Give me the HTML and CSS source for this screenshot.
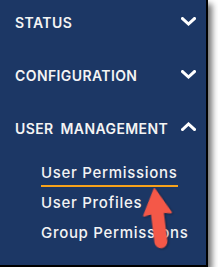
FILE: index.html
```html
<!DOCTYPE html>
<html lang="en">
<head>
  <meta charset="UTF-8" />
  <title>Sidebar menu</title>
  <link rel="stylesheet" href="styles.css">
</head>
<body>
  <nav class="sidebar">
    <div class="section">
      <div class="section-head">
        <span>STATUS</span>
        <svg class="chev" viewBox="0 0 15 9"><polyline points="1.5,1.5 7.5,7 13.5,1.5"/></svg>
      </div>
    </div>
    <div class="section">
      <div class="section-head">
        <span>CONFIGURATION</span>
        <svg class="chev" viewBox="0 0 15 9"><polyline points="1.5,1.5 7.5,7 13.5,1.5"/></svg>
      </div>
    </div>
    <div class="section open">
      <div class="section-head">
        <span class="wide">USER MANAGEMENT</span>
        <svg class="chev up" viewBox="0 0 15 9"><polyline points="1.5,7.5 7.5,2 13.5,7.5"/></svg>
      </div>
      <ul class="submenu">
        <li><a class="active">User Permissions</a></li>
        <li><a>User Profiles</a></li>
        <li><a>Group Permissions</a></li>
      </ul>
    </div>

    <!-- callout arrow -->
    <svg class="arrow" viewBox="0 0 30 64">
      <path d="M15 3 L28.5 28 L20.5 26.5 L20.5 56 A5.5 5.5 0 0 1 9.5 56 L9.5 26.5 L1.5 28 Z"/>
    </svg>
  </nav>
</body>
</html>
```

FILE: styles.css
```css
body {
  margin: 0;
  background: #fff;
  font-family: Inter, 'Open Sans', sans-serif;
}

.sidebar {
  position: relative;
  width: 206px;
  height: 252px;
  padding-top: 13px;
  background: #1c3765;
  border-left: 1px solid #000;
  border-right: 2px solid #000;
  border-bottom: 2px solid #000;
  margin-left: -1px;
  box-shadow: 4px 4px 6px rgba(0,0,0,0.55);
  color: #f4f4f4;
}

.section {
  padding-bottom: 33px;
}

.section.open {
  padding-bottom: 0;
}

.section-head {
  display: flex;
  justify-content: space-between;
  align-items: center;
  height: 20px;
  line-height: 20px;
  padding: 0 10px 0 15px;
  font-size: 14px;
  font-weight: 600;
  letter-spacing: 0.4px;
}

.section-head .wide {
  word-spacing: 3px;
}

.chev {
  width: 15px;
  height: 9px;
  margin-top: -4px;
  fill: none;
  stroke: #fff;
  stroke-width: 3;
  stroke-linecap: square;
}

.chev.up {
  margin-top: -6px;
}

.submenu {
  list-style: none;
  margin: 23px 0 0;
  padding: 0 0 0 41px;
}

.submenu li a {
  display: inline-block;
  line-height: 20px;
  font-size: 15px;
  font-weight: 500;
  letter-spacing: 0.7px;
  padding-bottom: 2px;
  border-bottom: 2px solid transparent;
  margin-bottom: 5px;
}

.submenu li a.active {
  border-bottom-color: #f7a21b;
}

.arrow {
  position: absolute;
  left: 143px;
  top: 186px;
  width: 30px;
  height: 64px;
  transform: rotate(-7deg);
  fill: #f45848;
  stroke: #f45848;
  stroke-width: 2;
  stroke-linejoin: round;
  filter: drop-shadow(1px 1px 1px rgba(0,0,0,0.35));
}
```
